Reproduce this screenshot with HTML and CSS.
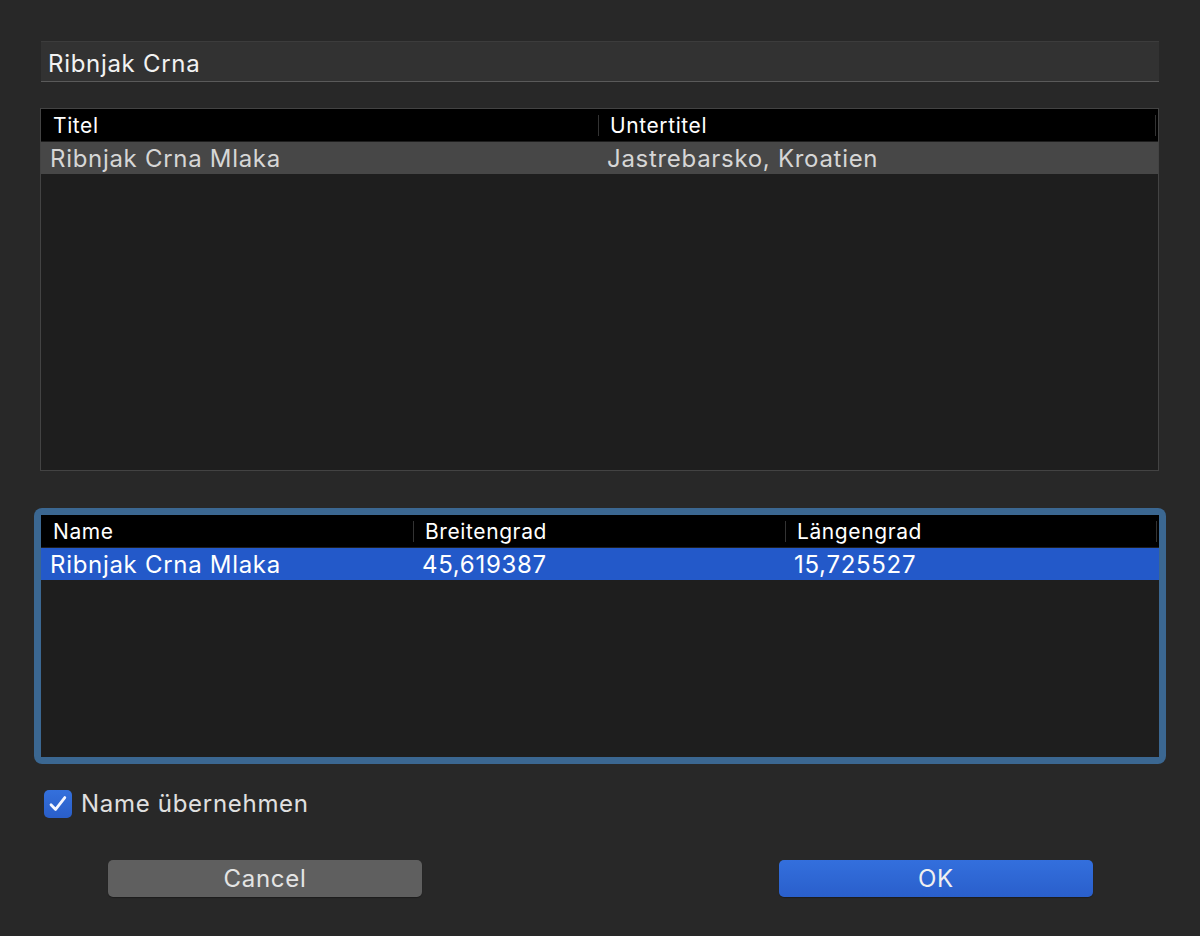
FILE: index.html
```html
<!DOCTYPE html>
<html lang="de">
<head>
    <meta charset="UTF-8">
    <title>Ort übernehmen</title>
    <link rel="stylesheet" href="styles.css">
</head>
<body>
    <div class="dialog">
        <div class="search-field">Ribnjak Crna</div>

        <!-- Suchergebnisse -->
        <div class="table results">
            <div class="table-head">
                <div class="col">Titel</div>
                <div class="col">Untertitel</div>
            </div>
            <div class="table-row">
                <div class="col">Ribnjak Crna Mlaka</div>
                <div class="col">Jastrebarsko, Kroatien</div>
            </div>
        </div>

        <!-- Koordinaten, hat den Fokus -->
        <div class="focus-ring">
            <div class="table coords">
                <div class="table-head">
                    <div class="col">Name</div>
                    <div class="col">Breitengrad</div>
                    <div class="col">Längengrad</div>
                </div>
                <div class="table-row selected">
                    <div class="col">Ribnjak Crna Mlaka</div>
                    <div class="col">45,619387</div>
                    <div class="col">15,725527</div>
                </div>
            </div>
        </div>

        <label class="check">
            <span class="check-box">
                <svg width="22" height="22" viewBox="0 0 22 22"><path d="M4 11.8 L8.6 16.4 L17.8 4.6" fill="none" stroke="#f4f6ff" stroke-width="2.8" stroke-linecap="round" stroke-linejoin="round"/></svg>
            </span>
            <span>Name übernehmen</span>
        </label>

        <div class="buttons">
            <button class="btn">Cancel</button>
            <button class="btn primary">OK</button>
        </div>
    </div>
</body>
</html>
```

FILE: styles.css
```css
body {
    margin: 0;
    background-color: #282828;
    font-family: Inter, "Noto Sans", sans-serif;
    color: #e6e6e6;
}

.dialog {
    width: 1200px;
    height: 936px;
    box-sizing: border-box;
    padding: 41px 41px 0 41px;
    display: flex;
    flex-direction: column;
}

.search-field {
    height: 41px;
    box-sizing: border-box;
    background-color: #323232;
    border-top: 1px solid #3c3c3c;
    border-bottom: 1px solid #5a5a5a;
    padding: 5px 0 0 7px;
    font-size: 24px;
    letter-spacing: 0.7px;
    line-height: 34px;
    color: #f2f2f2;
}

.table {
    background-color: #1e1e1e;
    box-sizing: border-box;
}

.results {
    margin-top: 26px;
    margin-left: -1px;
    height: 363px;
    border: 1px solid #434343;
}

.table-head {
    display: grid;
    background-color: #000;
    height: 32px;
    align-items: center;
    font-size: 21px;
    letter-spacing: 0.6px;
    color: #fff;
}

.table-head .col {
    padding-left: 11px;
    border-left: 1px solid #333;
    line-height: 21px;
}

.table-head .col:first-child {
    border-left: none;
    padding-left: 12px;
}

.table-head .col:last-child {
    border-right: 1px solid #333;
    margin-right: 2px;
}

.table-row {
    display: grid;
    height: 32px;
    align-items: center;
    font-size: 24px;
    letter-spacing: 0.7px;
    color: #d6d6d6;
    background-color: #474747;
}

.table-row .col {
    padding-left: 9px;
}

.results .table-head,
.results .table-row {
    grid-template-columns: 557px 1fr;
}

.results .table-row {
    margin-top: 1px;
}

.focus-ring {
    margin-top: 37px;
    margin-left: -7px;
    margin-right: -7px;
    padding: 7px;
    background-color: #3b6791;
    border-radius: 8px;
}

.coords {
    height: 242px;
}

.coords .table-head,
.coords .table-row {
    grid-template-columns: 372px 372px 1fr;
}

.coords .table-row {
    margin-top: 1px;
}

.table-row.selected {
    background-color: #2359c9;
    color: #fff;
}

.check {
    margin-top: 25px;
    display: flex;
    align-items: center;
    gap: 9px;
    font-size: 24px;
    letter-spacing: 0.7px;
    color: #e0e0e0;
    margin-left: 3px;
}

.check-box {
    width: 28px;
    height: 28px;
    border-radius: 5px;
    background: linear-gradient(#3470dc, #2a5ec8);
    display: flex;
    align-items: center;
    justify-content: center;
}

.buttons {
    margin-top: 42px;
    display: flex;
    justify-content: space-between;
    padding: 0 66px 0 67px;
}

.btn {
    width: 314px;
    height: 37px;
    border: none;
    border-radius: 5px;
    background-color: #5f5f5f;
    color: #e4e4e4;
    font-family: Inter, "Noto Sans", sans-serif;
    font-size: 24px;
    letter-spacing: 0.7px;
    padding: 0;
    box-shadow: 0 1px 1px rgba(0, 0, 0, 0.3);
}

.btn.primary {
    background: linear-gradient(#336fdd, #2a5fcb);
    color: #f0f0f0;
}
```
